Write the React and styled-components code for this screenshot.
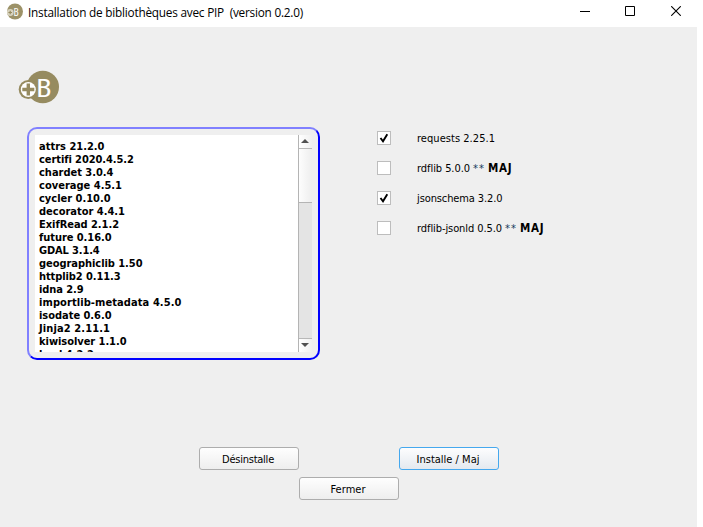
import React, { useLayoutEffect, useRef, useState } from "react";
import styled, { createGlobalStyle } from "styled-components";

const Global = createGlobalStyle`
  * { box-sizing: border-box; }
  body { margin: 0; background: #fff; overflow: hidden; }
`;

const Window = styled.div`
  width: 697px;
  height: 527px;
  background: #efefef;
  color: #000;
  font: 11px/13px "DejaVu Sans Condensed", "DejaVu Sans", sans-serif;
  font-stretch: condensed;
  display: flex;
  flex-direction: column;
`;

const TitleBar = styled.header`
  height: 27px;
  width: 703px;
  flex: none;
  background: #fff;
  display: flex;
  align-items: flex-start;
  padding: 3px 0 0 7px;
`;

const Title = styled.h1`
  margin: 0 auto 0 5px;
  font: 11.8px/18px "Open Sans", "Noto Sans", sans-serif;
  white-space: pre;
`;

const WindowControls = styled.div`
  display: flex;
  gap: 35px;
  padding: 3px 22px 0 0;
  svg { display: block; }
  svg:last-child { margin-left: 1px; }
`;

const Content = styled.main`
  flex: 1;
  display: flex;
  flex-direction: column;
`;

const LogoArea = styled.div`
  height: 100px;
  padding: 43px 0 0 18px;
  svg { display: block; }
`;

const Panels = styled.div`
  display: flex;
  gap: 57px;
  padding-left: 27px;
  height: 320px;
  align-items: flex-start;
`;

const ListFrame = styled.section`
  width: 293px;
  height: 233px;
  flex: none;
  border: 2px solid;
  border-color: #8080ff #0000ff #0000ff #8080ff;
  border-radius: 10px;
  padding: 6px;
  display: flex;
`;

const List = styled.ul`
  margin: 0;
  padding: 5px 0 0 4px;
  list-style: none;
  flex: 1;
  height: 217px;
  background: #fff;
  overflow: hidden;
  font-weight: bold;
`;

const ListItem = styled.li`
  height: 13px;
  white-space: nowrap;
`;

const ScrollBar = styled.div`
  width: 14px;
  height: 217px;
  border-left: 1px solid #b4b4b4;
  background: #e4e4e4;
  display: flex;
  flex-direction: column;
`;

const ScrollButton = styled.button`
  border: 0;
  padding: 0 1px 1px 0;
  height: 14px;
  flex: none;
  background: linear-gradient(90deg, #fff, #f0f0f0);
  border-${(p) => p.$edge}: 1px solid #b8b8b8;
  display: flex;
  align-items: center;
  justify-content: center;
`;

const Thumb = styled.div`
  height: 54px;
  background: linear-gradient(90deg, #fdfdfd, #eeeeee);
  border-bottom: 1px solid #b4b4b4;
`;

const Track = styled.div`
  flex: 1;
`;

const Options = styled.div`
  display: flex;
  flex-direction: column;
  gap: 16px;
  padding-top: 4px;
`;

const Option = styled.label`
  height: 14px;
  display: flex;
  align-items: center;
`;

const CheckBox = styled.span`
  width: 14px;
  height: 14px;
  margin-right: 26px;
  border: 1px solid #bdbdbd;
  background: #fff;
  display: flex;
  align-items: center;
  justify-content: center;
`;

const UpdateNote = styled.span`
  display: flex;
  gap: 3px;
  margin-left: 3px;
`;

const Stars = styled.span`
  color: #123a5c;
`;

const Bold = styled.b`
  font-weight: bold;
  font-size: 11.5px;
`;

const Buttons = styled.footer`
  display: grid;
  grid-template-columns: repeat(3, 100px);
  grid-template-rows: 23px 23px;
  row-gap: 7px;
  padding-left: 199px;
`;

const Button = styled.button`
  grid-column: ${(p) => p.$column};
  grid-row: ${(p) => p.$row};
  border: 1px solid ${(p) => (p.$primary ? "#45a8ee" : "#adadad")};
  border-radius: 3px;
  background: ${(p) =>
    p.$primary
      ? "linear-gradient(#fdfdfe, #e4e9ef)"
      : "linear-gradient(#fefefe, #eeeeee)"};
  font: inherit;
  color: #000;
  padding: 2px 2px 0 0;
`;

const Fitted = styled.span`
  display: inline-block;
  white-space: pre;
`;

// Spreads or tightens the letters so that a label takes the given width.
function FitText({ width, children }) {
  const ref = useRef(null);
  const [spacing, setSpacing] = useState(0);
  useLayoutEffect(() => {
    const natural = ref.current.getBoundingClientRect().width;
    setSpacing((width - natural) / children.length);
  }, []);
  return (
    <Fitted ref={ref} style={{ letterSpacing: spacing }}>
      {children}
    </Fitted>
  );
}

const packages = [
  ["attrs 21.2.0", 65.5],
  ["certifi 2020.4.5.2", 94.5],
  ["chardet 3.0.4", 74.5],
  ["coverage 4.5.1", 83],
  ["cycler 0.10.0", 71.5],
  ["decorator 4.4.1", 86],
  ["ExifRead 2.1.2", 80],
  ["future 0.16.0", 72.5],
  ["GDAL 3.1.4", 60.5],
  ["geographiclib 1.50", 103.5],
  ["httplib2 0.11.3", 81.5],
  ["idna 2.9", 44.5],
  ["importlib-metadata 4.5.0", 142.5],
  ["isodate 0.6.0", 72.5],
  ["Jinja2 2.11.1", 71],
  ["kiwisolver 1.1.0", 87.5],
  ["lxml 4.2.2", 55],
];

const options = [
  { label: "requests 2.25.1", width: 78, checked: true },
  { label: "rdflib 5.0.0", width: 53, update: true },
  { label: "jsonschema 3.2.0", width: 85.5, checked: true },
  { label: "rdflib-jsonld 0.5.0", width: 85, update: true },
];

const SmallLogo = () => (
  <svg width="16" height="17" viewBox="0 0 16 17">
    <circle cx="8" cy="8.5" r="8" fill="#9c9268" />
    <circle cx="3.2" cy="9.5" r="3.4" fill="#d8d3bf" />
    <path d="M3.2 7.7v3.6M1.4 9.5h3.6" stroke="#968b60" strokeWidth="1.2" />
    <text x="6.6" y="12.5" fontFamily="Open Sans" fontSize="11" fill="#fff">B</text>
  </svg>
);

const Logo = () => (
  <svg width="42" height="34" viewBox="0 0 42 34">
    <circle cx="24.8" cy="17" r="16.2" fill="#968b60" />
    <circle cx="10.3" cy="19.5" r="9.6" fill="#968b60" />
    <circle cx="10.3" cy="19.5" r="7.5" fill="#fff" />
    <path d="M10.3 13.5v12M4.3 19.5h12" stroke="#968b60" strokeWidth="3.4" />
    <text x="18" y="26.5" fontFamily="Open Sans" fontSize="25" textLength="15.5" lengthAdjust="spacingAndGlyphs" fill="#fff">B</text>
  </svg>
);

const Arrow = ({ down }) => (
  <svg width="8" height="4" viewBox="0 0 8 4">
    <path d={down ? "M0 0h8L4 4z" : "M0 4h8L4 0z"} fill="#505050" />
  </svg>
);

export default function App() {
  return (
    <Window>
      <Global />
      <TitleBar>
        <SmallLogo />
        <Title>
          <FitText width={275}>{"Installation de bibliothèques avec PIP  (version 0.2.0)"}</FitText>
        </Title>
        <WindowControls>
          <svg width="10" height="10"><path d="M0 5.5h10" stroke="#000" /></svg>
          <svg width="10" height="10"><path d="M.5 .5h9v9h-9z" fill="none" stroke="#000" /></svg>
          <svg width="10" height="10"><path d="M.2 .2l9.6 9.6M9.8 .2l-9.6 9.6" stroke="#000" strokeWidth="1.1" /></svg>
        </WindowControls>
      </TitleBar>
      <Content>
        <LogoArea><Logo /></LogoArea>
        <Panels>
          <ListFrame>
            <List>
              {packages.map(([name, width]) => (
                <ListItem key={name}><FitText width={width}>{name}</FitText></ListItem>
              ))}
            </List>
            <ScrollBar>
              <ScrollButton $edge="bottom"><Arrow /></ScrollButton>
              <Thumb />
              <Track />
              <ScrollButton $edge="top"><Arrow down /></ScrollButton>
            </ScrollBar>
          </ListFrame>
          <Options>
            {options.map((o) => (
              <Option key={o.label}>
                <CheckBox>
                  {o.checked && (
                    <svg width="10" height="10" viewBox="0 0 10 10">
                      <path d="M1.5 5L4 8.3 8.3 1.2" fill="none" stroke="#000" strokeWidth="1.9" />
                    </svg>
                  )}
                </CheckBox>
                <FitText width={o.width}>{o.label}</FitText>
                {o.update && (
                  <UpdateNote>
                    <Stars><FitText width={12}>**</FitText></Stars>
                    <Bold><FitText width={24.5}>MAJ</FitText></Bold>
                  </UpdateNote>
                )}
              </Option>
            ))}
          </Options>
        </Panels>
        <Buttons>
          <Button $column={1} $row={1}><FitText width={52}>Désinstalle</FitText></Button>
          <Button $column={3} $row={1} $primary><FitText width={63}>Installe / Maj</FitText></Button>
          <Button $column={2} $row={2}><FitText width={35}>Fermer</FitText></Button>
        </Buttons>
      </Content>
    </Window>
  );
}
